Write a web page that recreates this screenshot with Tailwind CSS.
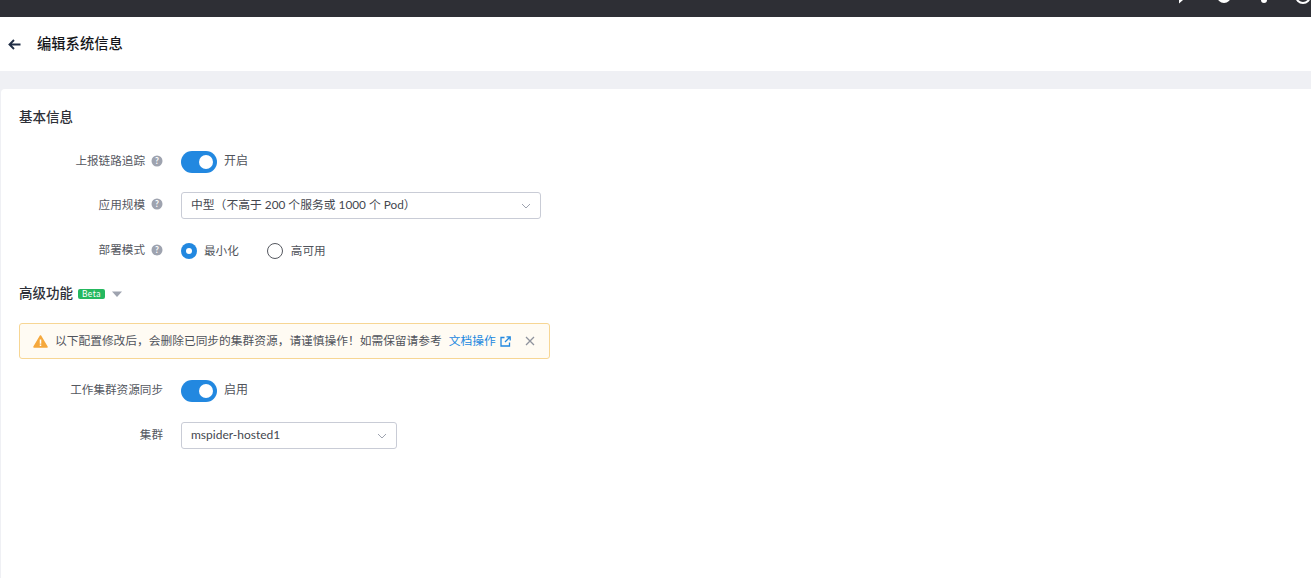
<!DOCTYPE html>
<html lang="zh-CN">
<head>
    <meta charset="UTF-8">
    <meta name="viewport" content="width=device-width, initial-scale=1.0">
    <title>编辑系统信息</title>
    <script src="https://cdn.jsdelivr.net/npm/@tailwindcss/browser@4"></script>
</head>
<body class="h-[578px] overflow-hidden bg-[#eff0f4] font-['Lato','Noto_Sans_CJK_SC',sans-serif] text-[11.6px] text-[#3c3f47]">
    <!-- top nav, mostly scrolled out of view -->
    <div class="relative h-[17px] overflow-hidden bg-[#2e2f35]">
        <svg class="absolute left-[1177px] top-[-12px] size-4" viewBox="0 0 16 16" fill="#fff"><path d="M1 1h14v11H6l-4 3.500V12H1z"/></svg>
        <div class="absolute left-[1217px] top-[-11px] size-[14px] rounded-full bg-white"></div>
        <div class="absolute left-[1261px] top-[-1px] h-[4px] w-[6px] rounded-b bg-white"></div>
        <div class="absolute left-[1295px] top-[-12px] size-[16px] rounded-full border-2 border-white"></div>
    </div>

    <header class="flex h-[54px] items-center bg-white pl-[8px]">
        <svg class="size-[13px] text-[#1f2d45]" viewBox="0 0 13 13" fill="none" stroke="currentColor" stroke-width="1.900"><path d="M12.500 6.500H1.500M6 2 1.500 6.500 6 11"/></svg>
        <h1 class="ml-[16px] text-[14.3px] font-medium leading-none text-[#15161a]">编辑系统信息</h1>
    </header>

    <main class="ml-px mt-[18px] h-[489px] rounded-tl-[4px] bg-white pl-[18px] pt-[19px]">
        <h2 class="text-[13.5px] font-medium leading-[18px] text-[#2e3038]">基本信息</h2>

        <div class="mt-[25px] flex h-[22px] items-center">
            <label class="flex w-[144px] items-center justify-end gap-[6px] pb-[2px] text-[#55585f]">上报链路追踪
                <svg class="size-[12px]" viewBox="0 0 12 12"><circle cx="6" cy="6" r="5.500" fill="#9ea3af"/><text x="6" y="9" text-anchor="middle" font-size="8.500" font-weight="700" fill="#fff">?</text></svg>
            </label>
            <span class="ml-[18px] flex h-[22px] w-[36px] items-center justify-end rounded-full bg-[#2288e0] pr-[4px]"><span class="size-[14px] rounded-full bg-white"></span></span>
            <span class="ml-[7px] pb-[2px] text-[12px] text-[#50535b]">开启</span>
        </div>

        <div class="mt-[19px] flex h-[27px] items-center">
            <label class="flex w-[144px] items-center justify-end gap-[6px] pb-[2px] text-[#55585f]">应用规模
                <svg class="size-[12px]" viewBox="0 0 12 12"><circle cx="6" cy="6" r="5.500" fill="#9ea3af"/><text x="6" y="9" text-anchor="middle" font-size="8.500" font-weight="700" fill="#fff">?</text></svg>
            </label>
            <div class="ml-[18px] flex h-[27px] w-[360px] items-center justify-between rounded-[3px] border border-[#c9ccd6] px-[9px] text-[#44474f]">
                <span class="pb-[2px] text-[11.8px]">中型（不高于 200 个服务或 1000 个 Pod）</span>
                <svg class="size-[10px] text-[#9ea3af]" viewBox="0 0 10 10" fill="none" stroke="currentColor"><path d="M1 3l4 4 4-4"/></svg>
            </div>
        </div>

        <div class="mt-[21px] flex h-[22px] items-center">
            <label class="flex w-[144px] items-center justify-end gap-[6px] pb-[2px] text-[#55585f]">部署模式
                <svg class="size-[12px]" viewBox="0 0 12 12"><circle cx="6" cy="6" r="5.500" fill="#9ea3af"/><text x="6" y="9" text-anchor="middle" font-size="8.500" font-weight="700" fill="#fff">?</text></svg>
            </label>
            <span class="ml-[18px] flex size-[16px] items-center justify-center rounded-full bg-[#2288e0]"><span class="size-[6px] rounded-full bg-white"></span></span>
            <span class="ml-[7px] text-[#50535b]">最小化</span>
            <span class="ml-[28px] size-[16px] rounded-full border border-[#55585f]"></span>
            <span class="ml-[8px] text-[#50535b]">高可用</span>
        </div>

        <div class="mt-[23px] flex h-[18px] items-center">
            <h2 class="pb-[2px] text-[13.5px] font-medium leading-[18px] text-[#2e3038]">高级功能</h2>
            <span class="ml-[5px] flex h-[10px] w-[27px] items-center justify-center rounded-[2px] bg-[#25b85f] text-[8.5px] leading-none tracking-[0.5px] text-white">Beta</span>
            <svg class="ml-[7px] size-[10px]" viewBox="0 0 10 10" fill="#9ea3af"><path d="M0 2.500h10L5 8z"/></svg>
        </div>

        <div class="mt-[20px] flex h-[36px] w-[531px] items-center rounded-[3px] border border-[#f7d694] bg-[#fffbf3] pl-[13px] text-[11.72px] text-[#50535b]">
            <svg class="size-[15px]" viewBox="0 0 15 15"><path d="M7.500 2 14 13H1z" fill="#f5a83c" stroke="#f5a83c" stroke-width="1.500" stroke-linejoin="round"/><path d="M7.500 5.500v4.200M7.500 10.500v1.600" stroke="#fff" stroke-width="1.500"/></svg>
            <span class="ml-[7px]">以下配置修改后，会删除已同步的集群资源，请谨慎操作！如需保留请参考</span>
            <a class="ml-[7px] text-[#2288e0]">文档操作</a>
            <svg class="ml-[4px] size-[11px] text-[#2288e0]" viewBox="0 0 11 11" fill="none" stroke="currentColor" stroke-width="1.300"><path d="M4.500 1.500H1v8.500h8.500V6.500M6.500.8h3.700v3.700M10 1 5 6"/></svg>
            <svg class="ml-[14px] size-[10px] text-[#8f939d]" viewBox="0 0 10 10" fill="none" stroke="currentColor" stroke-width="1.300"><path d="M1 1l8 8M9 1 1 9"/></svg>
        </div>

        <div class="mt-[21px] flex h-[22px] items-center">
            <label class="w-[144px] pb-[2px] text-right text-[#55585f]">工作集群资源同步</label>
            <span class="ml-[18px] flex h-[22px] w-[36px] items-center justify-end rounded-full bg-[#2288e0] pr-[4px]"><span class="size-[14px] rounded-full bg-white"></span></span>
            <span class="ml-[7px] pb-[2px] text-[12px] text-[#50535b]">启用</span>
        </div>

        <div class="mt-[20px] flex h-[27px] items-center">
            <label class="w-[144px] pb-[2px] text-right text-[#55585f]">集群</label>
            <div class="ml-[18px] flex h-[27px] w-[216px] items-center justify-between rounded-[3px] border border-[#c9ccd6] px-[9px] text-[#44474f]">
                <span class="pb-[2px] text-[12px]">mspider-hosted1</span>
                <svg class="size-[10px] text-[#9ea3af]" viewBox="0 0 10 10" fill="none" stroke="currentColor"><path d="M1 3l4 4 4-4"/></svg>
            </div>
        </div>
    </main>
</body>
</html>
